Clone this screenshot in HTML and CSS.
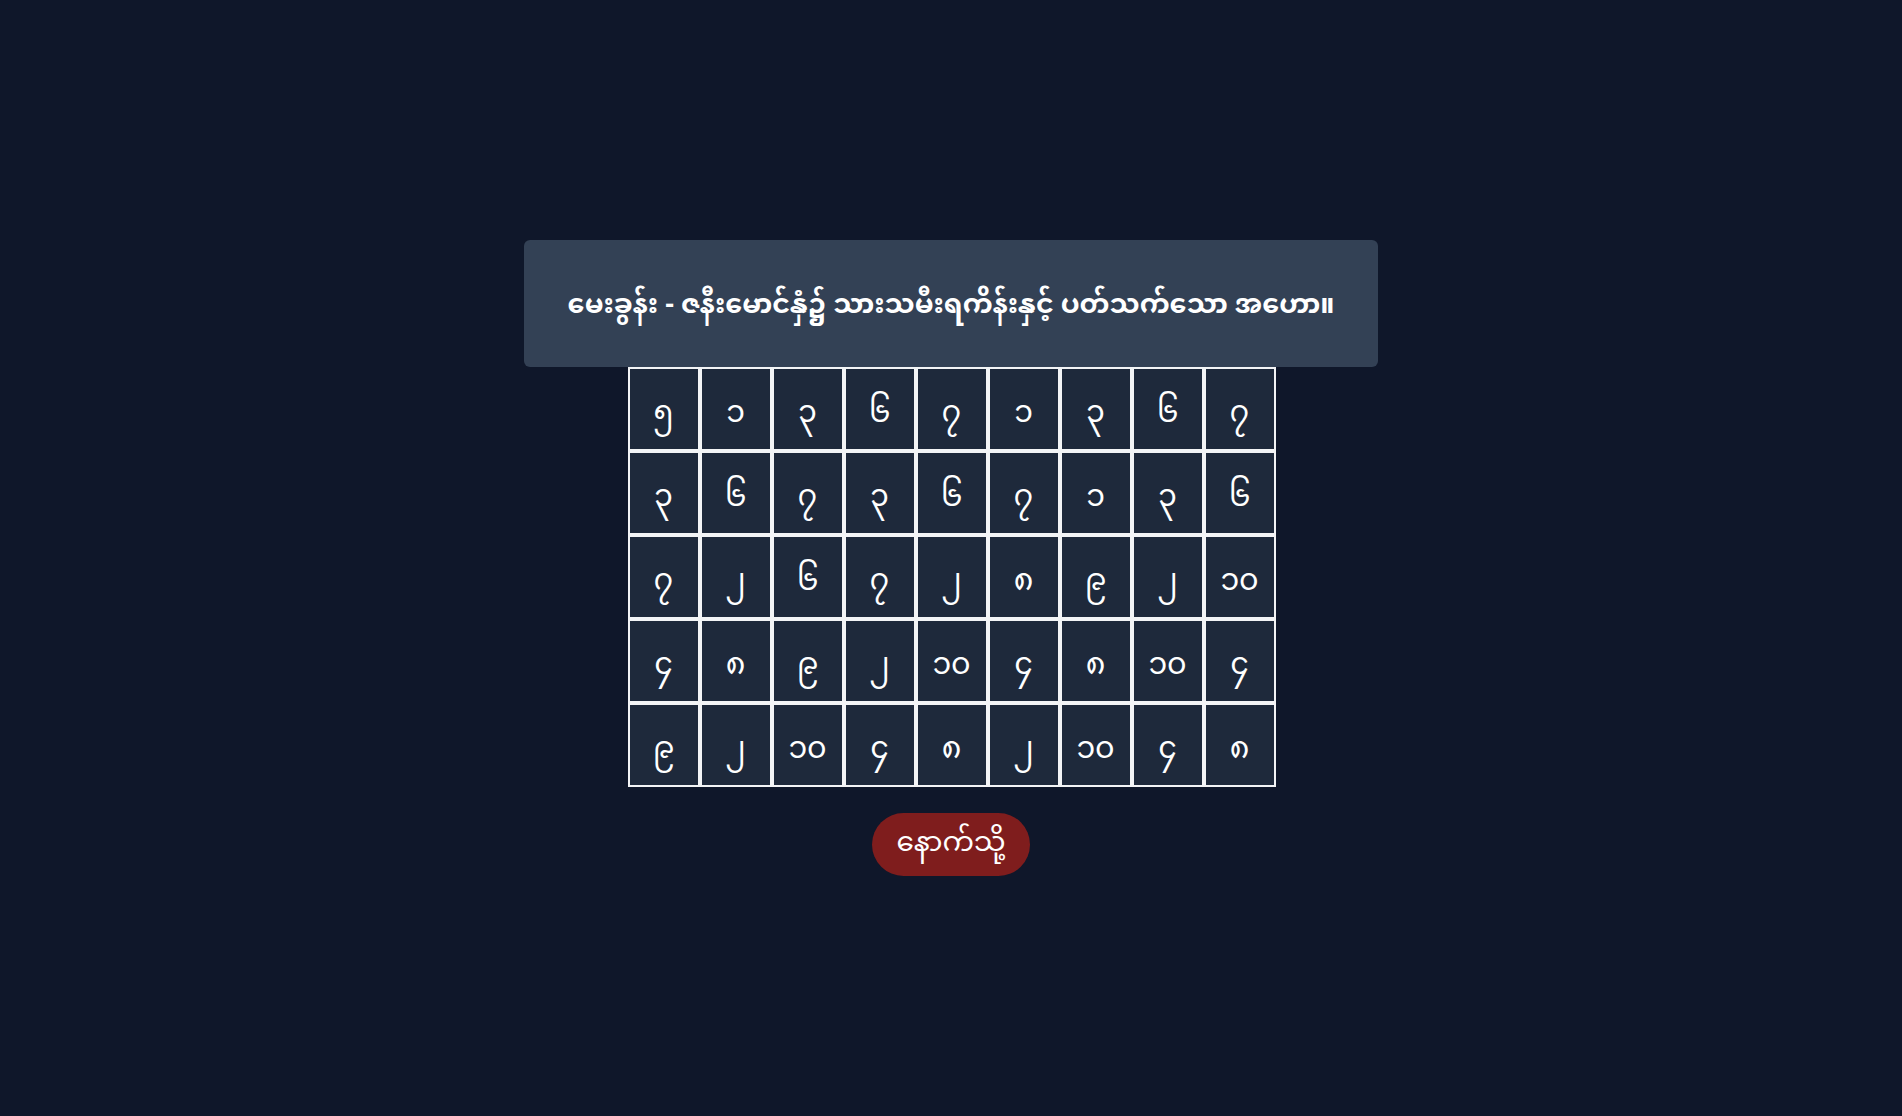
FILE: index.html
```html
<!DOCTYPE html>
<html lang="my">
<head>
<meta charset="utf-8">
<title>မေးခွန်း</title>
<link rel="stylesheet" href="styles.css">
</head>
<body>
<main class="page">
  <div class="quiz">
    <div class="question">မေးခွန်း - ဇနီးမောင်နှံ၌ သားသမီးရကိန်းနှင့် ပတ်သက်သော အဟော။</div>
    <div class="board">
      <div class="cell">၅</div><div class="cell">၁</div><div class="cell">၃</div><div class="cell">၆</div><div class="cell">၇</div><div class="cell">၁</div><div class="cell">၃</div><div class="cell">၆</div><div class="cell">၇</div>
      <div class="cell">၃</div><div class="cell">၆</div><div class="cell">၇</div><div class="cell">၃</div><div class="cell">၆</div><div class="cell">၇</div><div class="cell">၁</div><div class="cell">၃</div><div class="cell">၆</div>
      <div class="cell">၇</div><div class="cell">၂</div><div class="cell">၆</div><div class="cell">၇</div><div class="cell">၂</div><div class="cell">၈</div><div class="cell">၉</div><div class="cell">၂</div><div class="cell">၁၀</div>
      <div class="cell">၄</div><div class="cell">၈</div><div class="cell">၉</div><div class="cell">၂</div><div class="cell">၁၀</div><div class="cell">၄</div><div class="cell">၈</div><div class="cell">၁၀</div><div class="cell">၄</div>
      <div class="cell">၉</div><div class="cell">၂</div><div class="cell">၁၀</div><div class="cell">၄</div><div class="cell">၈</div><div class="cell">၂</div><div class="cell">၁၀</div><div class="cell">၄</div><div class="cell">၈</div>
    </div>
    <button class="back">နောက်သို့</button>
  </div>
</main>
</body>
</html>
```
FILE: styles.css
```css
html, body {
  margin: 0;
  padding: 0;
  height: 100%;
}
body {
  background: #0f172a;
  color: #ffffff;
  font-family: "Noto Sans Myanmar", "Padauk", "Myanmar Text", "Noto Sans", sans-serif;
}
.page {
  min-height: 100vh;
  display: flex;
  align-items: center;
  justify-content: center;
}
.quiz {
  display: flex;
  flex-direction: column;
  align-items: center;
}
.question {
  width: 854px;
  box-sizing: border-box;
  height: 127px;
  padding-top: 6px;
  background: #334155;
  border-radius: 6px;
  display: flex;
  align-items: center;
  justify-content: center;
  font-size: 27px;
  font-weight: 700;
  color: #ffffff;
}
.board {
  display: grid;
  grid-template-columns: repeat(9, 72px);
  grid-auto-rows: 84px;
  margin-left: 1px;
}
.cell {
  box-sizing: border-box;
  border: 2px solid #f3f4f6;
  background: #1e293b;
  display: flex;
  align-items: center;
  justify-content: center;
  padding-top: 12px;
  font-size: 30px;
  color: #ffffff;
}
.back {
  margin-top: 26px;
  width: 158px;
  height: 63px;
  border: none;
  border-radius: 32px;
  background: #7f1d1d;
  color: #ffffff;
  font-family: inherit;
  font-weight: 400;
  font-size: 28px;
  cursor: pointer;
}
```
